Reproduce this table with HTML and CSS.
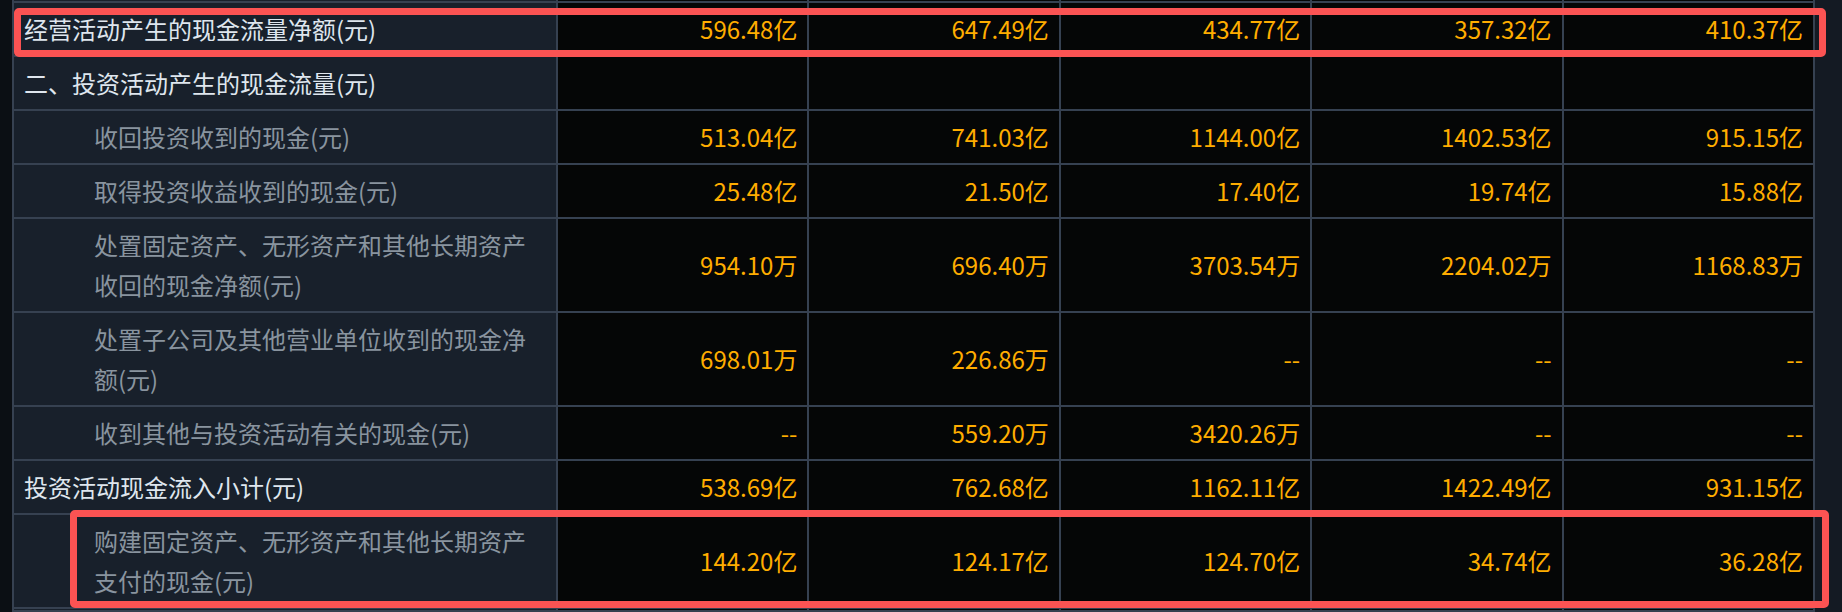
FILE: index.html
```html
<!DOCTYPE html>
<html lang="zh-CN">
<head>
<meta charset="utf-8">
<title>现金流量表</title>
<link rel="stylesheet" href="styles.css">
</head>
<body>
<div class="page">
  <div class="gutter"></div>
  <div class="sheet">
    <div class="row stub"><div class="label"></div><div class="val"></div><div class="val"></div><div class="val"></div><div class="val"></div><div class="val"></div></div>

    <div class="row">
      <div class="label top">经营活动产生的现金流量净额(元)</div>
      <div class="val">596.48亿</div><div class="val">647.49亿</div><div class="val">434.77亿</div><div class="val">357.32亿</div><div class="val">410.37亿</div>
    </div>
    <div class="row">
      <div class="label top">二、投资活动产生的现金流量(元)</div>
      <div class="val"></div><div class="val"></div><div class="val"></div><div class="val"></div><div class="val"></div>
    </div>
    <div class="row">
      <div class="label sub">收回投资收到的现金(元)</div>
      <div class="val">513.04亿</div><div class="val">741.03亿</div><div class="val">1144.00亿</div><div class="val">1402.53亿</div><div class="val">915.15亿</div>
    </div>
    <div class="row">
      <div class="label sub">取得投资收益收到的现金(元)</div>
      <div class="val">25.48亿</div><div class="val">21.50亿</div><div class="val">17.40亿</div><div class="val">19.74亿</div><div class="val">15.88亿</div>
    </div>
    <div class="row">
      <div class="label sub">处置固定资产、无形资产和其他长期资产收回的现金净额(元)</div>
      <div class="val">954.10万</div><div class="val">696.40万</div><div class="val">3703.54万</div><div class="val">2204.02万</div><div class="val">1168.83万</div>
    </div>
    <div class="row">
      <div class="label sub">处置子公司及其他营业单位收到的现金净额(元)</div>
      <div class="val">698.01万</div><div class="val">226.86万</div><div class="val">--</div><div class="val">--</div><div class="val">--</div>
    </div>
    <div class="row">
      <div class="label sub">收到其他与投资活动有关的现金(元)</div>
      <div class="val">--</div><div class="val">559.20万</div><div class="val">3420.26万</div><div class="val">--</div><div class="val">--</div>
    </div>
    <div class="row">
      <div class="label top">投资活动现金流入小计(元)</div>
      <div class="val">538.69亿</div><div class="val">762.68亿</div><div class="val">1162.11亿</div><div class="val">1422.49亿</div><div class="val">931.15亿</div>
    </div>
    <div class="row">
      <div class="label sub">购建固定资产、无形资产和其他长期资产支付的现金(元)</div>
      <div class="val">144.20亿</div><div class="val">124.17亿</div><div class="val">124.70亿</div><div class="val">34.74亿</div><div class="val">36.28亿</div>
    </div>

    <div class="row stub"><div class="label"></div><div class="val"></div><div class="val"></div><div class="val"></div><div class="val"></div><div class="val"></div></div>
  </div>
  <div class="track"></div>
</div>
<div class="mark mark-one"></div>
<div class="mark mark-two"></div>
</body>
</html>
```

FILE: styles.css
```css
html, body {
  margin: 0;
  padding: 0;
}

body {
  width: 1842px;
  height: 612px;
  overflow: hidden;
  background: #0b0f14;
  font-family: "Noto Sans CJK SC", "Noto Sans", sans-serif;
  font-size: 24px;
  line-height: 40px;
  position: relative;
}

.page {
  display: flex;
  height: 612px;
}

.gutter {
  width: 12px;
  flex: none;
  background: #0b0f14;
}

.sheet {
  width: 1803px;
  flex: none;
  box-sizing: border-box;
  padding: 0 2px;
  background: #364151;
  display: flex;
  flex-direction: column;
  gap: 2px;
}

.track {
  flex: 1;
  background: #141a23;
}

.row {
  display: grid;
  grid-template-columns: 542px repeat(5, 1fr);
  column-gap: 2px;
  min-height: 52px;
}

.row.stub {
  min-height: 0;
  height: 1px;
}

.label {
  background: #18202b;
  padding: 6px 10px;
  box-sizing: border-box;
}

.label.top {
  color: #dfe6ee;
}

.label.sub {
  color: #89949f;
  padding-left: 80px;
}

.row.stub .label,
.row.stub .val {
  padding: 0;
}

.val {
  background: #050606;
  color: #ffad00;
  display: flex;
  align-items: center;
  justify-content: flex-end;
  padding: 0 10px;
}

.mark {
  position: absolute;
  border: 7.5px solid #fb5353;
  border-radius: 5px;
  box-sizing: border-box;
}

.mark-one {
  left: 14px;
  top: 8px;
  width: 1812px;
  height: 49px;
}

.mark-two {
  left: 70px;
  top: 510px;
  width: 1759px;
  height: 98px;
}
```
